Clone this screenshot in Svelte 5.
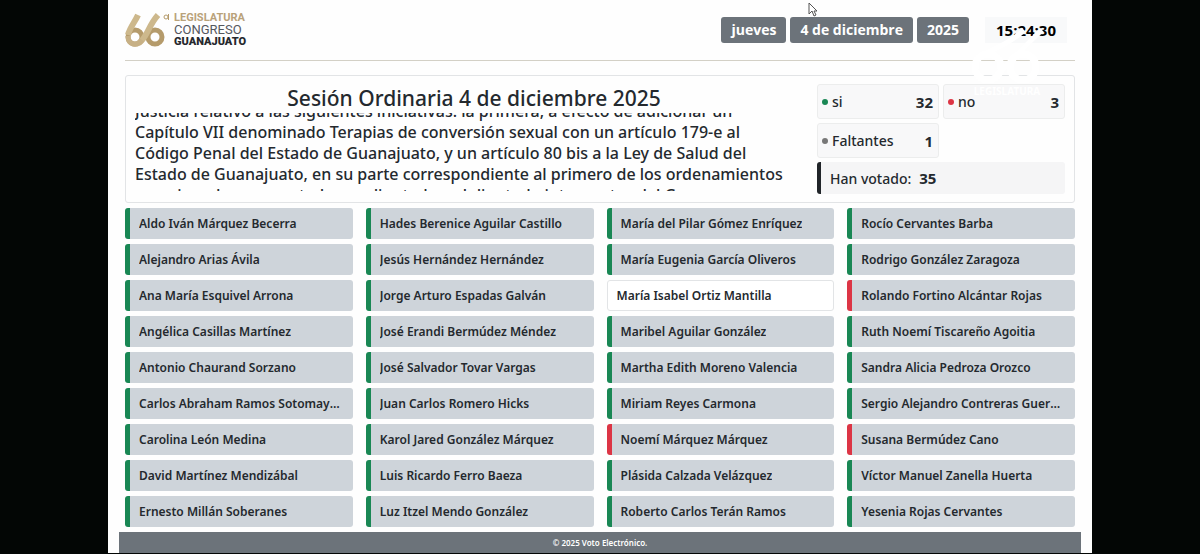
<script lang="ts">
  type Vote = 'si' | 'no' | 'none';

  interface Member {
    name: string;
    vote: Vote;
  }

  const against = ['Rolando Fortino Alcántar Rojas', 'Noemí Márquez Márquez', 'Susana Bermúdez Cano'];
  const missing = ['María Isabel Ortiz Mantilla'];

  const names = [
    'Aldo Iván Márquez Becerra',
    'Alejandro Arias Ávila',
    'Ana María Esquivel Arrona',
    'Angélica Casillas Martínez',
    'Antonio Chaurand Sorzano',
    'Carlos Abraham Ramos Sotomayor',
    'Carolina León Medina',
    'David Martínez Mendizábal',
    'Ernesto Millán Soberanes',
    'Hades Berenice Aguilar Castillo',
    'Jesús Hernández Hernández',
    'Jorge Arturo Espadas Galván',
    'José Erandi Bermúdez Méndez',
    'José Salvador Tovar Vargas',
    'Juan Carlos Romero Hicks',
    'Karol Jared González Márquez',
    'Luis Ricardo Ferro Baeza',
    'Luz Itzel Mendo González',
    'María del Pilar Gómez Enríquez',
    'María Eugenia García Oliveros',
    'María Isabel Ortiz Mantilla',
    'Maribel Aguilar González',
    'Martha Edith Moreno Valencia',
    'Miriam Reyes Carmona',
    'Noemí Márquez Márquez',
    'Plásida Calzada Velázquez',
    'Roberto Carlos Terán Ramos',
    'Rocío Cervantes Barba',
    'Rodrigo González Zaragoza',
    'Rolando Fortino Alcántar Rojas',
    'Ruth Noemí Tiscareño Agoitia',
    'Sandra Alicia Pedroza Orozco',
    'Sergio Alejandro Contreras Guerrero',
    'Susana Bermúdez Cano',
    'Víctor Manuel Zanella Huerta',
    'Yesenia Rojas Cervantes',
  ];

  function voteOf(name: string): Vote {
    if (against.includes(name)) return 'no';
    if (missing.includes(name)) return 'none';
    return 'si';
  }

  const members: Member[] = names.map((name) => ({ name, vote: voteOf(name) }));

  const date = ['jueves', '4 de diciembre', '2025'];

  const totals = [
    { label: 'si', value: 32, kind: 'si' },
    { label: 'no', value: 3, kind: 'no' },
    { label: 'Faltantes', value: 1, kind: 'none' },
  ];

  const topic = [
    'Justicia relativo a las siguientes iniciativas: la primera, a efecto de adicionar un',
    'Capítulo VII denominado Terapias de conversión sexual con un artículo 179-e al',
    'Código Penal del Estado de Guanajuato, y un artículo 80 bis a la Ley de Salud del',
    'Estado de Guanajuato, en su parte correspondiente al primero de los ordenamientos',
    'mencionados, presentada por diputada y el diputado integrantes del Grupo',
  ];
</script>

<div class="screen">
  <header class="topbar">
    <div class="brand">
      <svg class="emblem" viewBox="0 0 46 36" aria-hidden="true">
        <g fill="none" stroke-width="5">
          <circle cx="10" cy="25" r="7" stroke="#b59b6b" />
          <circle cx="30" cy="25" r="7" stroke="#b59b6b" />
          <path d="M13 3 C10 10 5 15 3 23" stroke="#cdb88c" stroke-width="6" />
          <path d="M14 31 C22 26 23 14 33 3" stroke="#cdb88c" stroke-width="6" />
          <path d="M3 24 C3 33 12 35 17 28" stroke="#c7b085" />
        </g>
        <circle cx="41" cy="5" r="2" fill="none" stroke="#b59b6b" />
        <path d="M43.500 2v6" stroke="#b59b6b" />
      </svg>
      <div class="brand-text">
        <span class="line-one">LEGISLATURA</span>
        <span class="line-two">CONGRESO</span>
        <span class="line-three">GUANAJUATO</span>
      </div>
    </div>
    <div class="date">
      {#each date as part}
        <span class="badge">{part}</span>
      {/each}
      <time class="clock">15:24:30</time>
    </div>
  </header>

  <main>
    <section class="summary">
      <div class="session">
        <h1>Sesión Ordinaria 4 de diciembre 2025</h1>
        <div class="scroller">
          <p>
            {#each topic as line}
              {line}<br />
            {/each}
          </p>
        </div>
      </div>
      <div class="totals">
        {#each totals as total}
          <div class="total">
            <span class="dot {total.kind}"></span>
            <span>{total.label}</span>
            <strong>{total.value}</strong>
          </div>
        {/each}
        <div class="voted">Han votado: <strong>35</strong></div>
      </div>
    </section>

    <ul class="members">
      {#each members as member}
        <li class="member {member.vote}"><span>{member.name}</span></li>
      {/each}
    </ul>
  </main>

  <footer>© 2025 Voto Electrónico.</footer>

  <!-- Broadcast watermark -->
  <svg class="watermark" viewBox="0 0 78 76" aria-hidden="true">
    <g fill="none" stroke="#fff" stroke-width="7">
      <circle cx="18" cy="45" r="13" />
      <circle cx="53" cy="45" r="13" />
      <path d="M6 38 C12 30 36 26 54 8" stroke-width="5" />
      <path d="M26 53 C38 44 52 26 72 8" stroke-width="5" />
    </g>
    <text x="37" y="73" text-anchor="middle">LEGISLATURA</text>
  </svg>

  <svg class="cursor" viewBox="0 0 10 15" aria-hidden="true">
    <path d="M1 1v11l3-3 2 5 2-1-2-4h3z" fill="#fff" stroke="#555" />
  </svg>
</div>

<style>
  :global(body) {
    background: #030605;
  }

  .screen {
    position: relative;
    margin: 0 9%;
    background: #fefefe;
    color: #24292e;
    font-family: 'Noto Sans', 'Open Sans', sans-serif;
    font-weight: 500;
  }

  .topbar {
    display: flex;
    justify-content: space-between;
    align-items: center;
    height: 60px;
    margin: 0 17px;
    border-bottom: 1px solid #d3d0c6;
  }

  .brand {
    display: flex;
    gap: 3px;
  }

  .emblem {
    width: 46px;
    height: 36px;
  }

  .brand-text {
    display: flex;
    flex-direction: column;
    font-family: Roboto, sans-serif;
    font-size: 11px;
    line-height: 12px;
  }

  .line-one {
    color: #b9a27a;
    font-weight: 700;
  }

  .line-two {
    color: #55585e;
    font-size: 13px;
    font-weight: 400;
  }

  .line-three {
    color: #26282d;
    font-weight: 900;
  }

  .date {
    display: flex;
    align-items: center;
    gap: 4px;
    font-family: 'Open Sans', sans-serif;
    font-weight: 700;
    line-height: 26px;
  }

  .badge {
    padding: 0 10px;
    border-radius: 3px;
    background: #6c737a;
    color: #fff;
    font-size: 14px;
  }

  .clock {
    margin: 0 8px 0 12px;
    padding: 0 11px;
    background: #f8f9fa;
    color: #000;
    font-size: 15px;
  }

  main {
    padding: 14px 17px 5px;
  }

  .summary {
    display: flex;
    gap: 12px;
    border: 1px solid #e2e4e6;
    border-radius: 3px;
    padding: 8px 9px;
  }

  .session {
    flex: 1;
    min-width: 0;
  }

  h1 {
    margin: 0;
    padding-left: 8px;
    font-size: 21px;
    font-weight: 500;
    line-height: 29px;
    text-align: center;
  }

  .scroller {
    height: 78px;
    overflow: hidden;
  }

  .scroller p {
    margin: -12px 0 0;
    font-size: 16px;
    line-height: 21px;
    white-space: nowrap;
  }

  .totals {
    display: grid;
    grid-template-columns: 1fr 1fr;
    gap: 4px;
    align-content: start;
    width: 248px;
    font-size: 14px;
  }

  .total {
    display: flex;
    align-items: center;
    gap: 4px;
    height: 33px;
    padding: 0 5px 0 4px;
    border: 1px solid #eceded;
    border-radius: 3px;
    background: #f8f8f9;
  }

  .totals strong {
    font-size: 15px;
  }

  .total strong {
    margin-left: auto;
  }

  .dot {
    width: 6px;
    height: 6px;
    border-radius: 50%;
    background: #777;
  }

  .dot.si {
    background: #198754;
  }

  .dot.no {
    background: #dc3545;
  }

  .voted {
    display: flex;
    align-items: center;
    gap: 8px;
    height: 32px;
    grid-column: 1 / -1;
    padding: 0 9px;
    border-left: 4px solid #212529;
    border-radius: 3px;
    background: #f5f5f6;
  }

  .members {
    display: grid;
    grid-template-rows: repeat(9, 31px);
    grid-auto-flow: column;
    grid-auto-columns: minmax(0, 1fr);
    gap: 5px 13px;
    margin: 5px 0 0;
    padding: 0;
    list-style: none;
  }

  .member {
    display: flex;
    align-items: center;
    padding: 0 12px 0 9px;
    border-left: 5px solid #198754;
    border-radius: 3px;
    background: #ced4da;
    font-size: 12px;
    font-weight: 600;
  }

  .member span {
    overflow: hidden;
    text-overflow: ellipsis;
    white-space: nowrap;
  }

  .member.no {
    border-color: #dc3545;
  }

  .member.none {
    border: 1px solid #e2e4e6;
    background: #fff;
  }

  footer {
    margin: 0 11px;
    background: #6c737a;
    color: #fff;
    font-size: 8px;
    font-weight: 600;
    line-height: 21px;
    text-align: center;
  }

  .watermark {
    position: absolute;
    top: 22px;
    right: 44px;
    width: 78px;
    height: 76px;
  }

  .watermark text {
    fill: #fff;
    font-size: 10px;
    font-weight: 700;
  }

  .cursor {
    position: absolute;
    top: 2px;
    left: 700px;
    width: 10px;
    height: 15px;
  }
</style>
